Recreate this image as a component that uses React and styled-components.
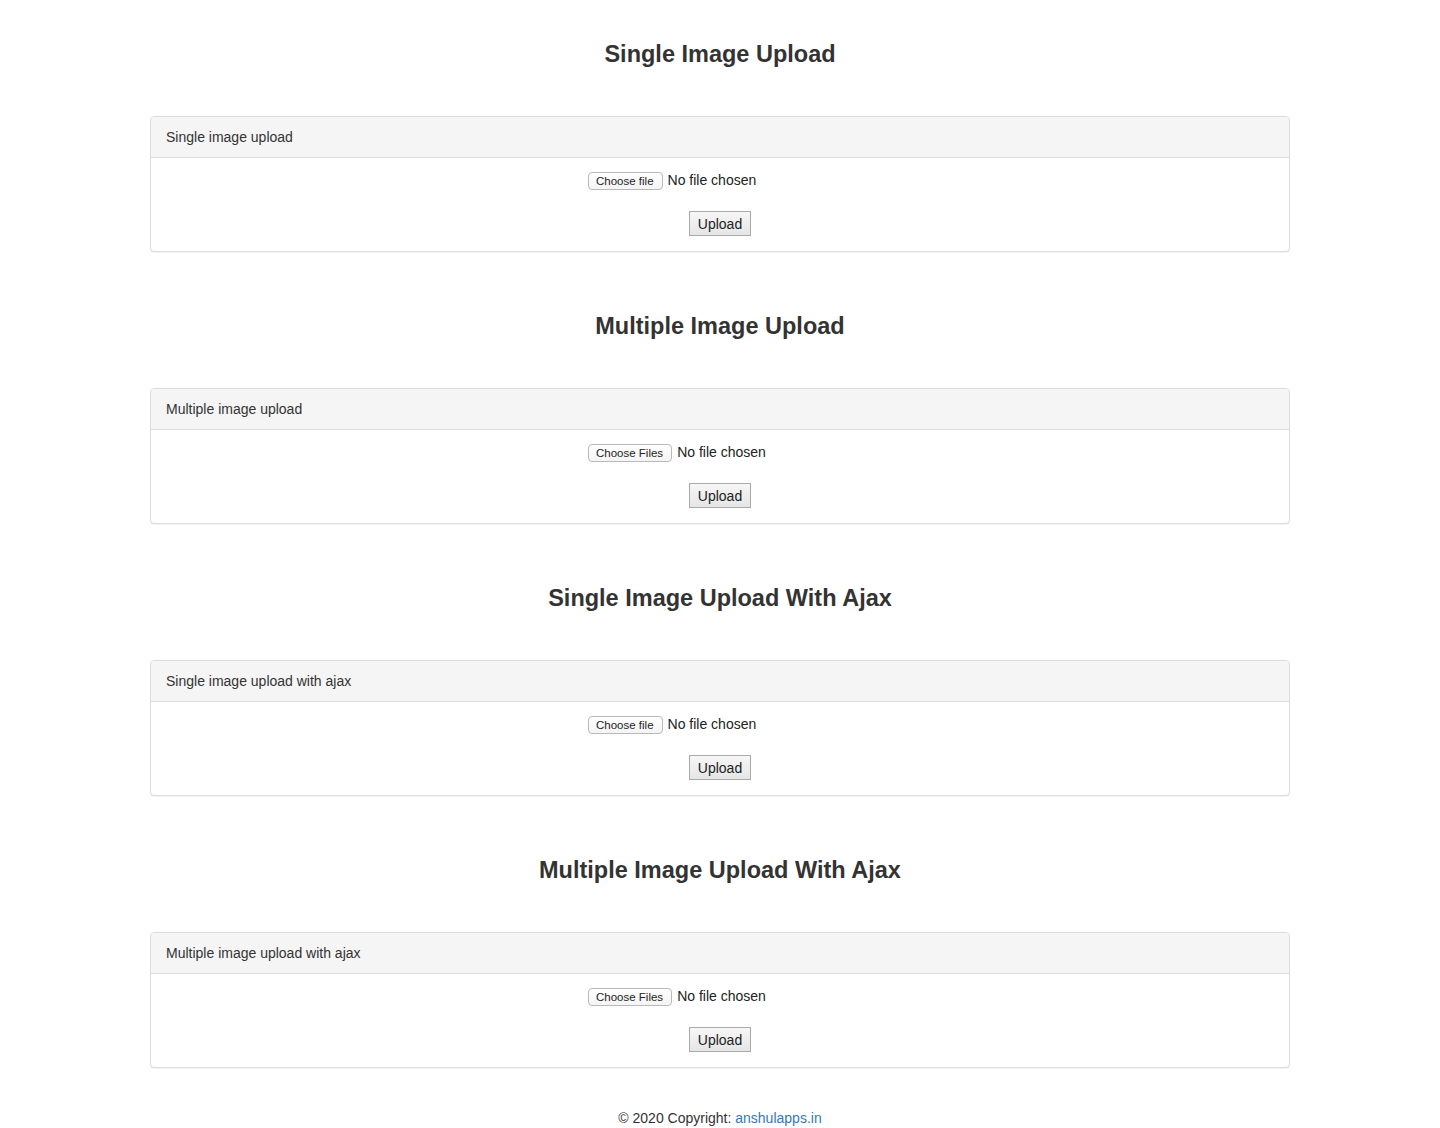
import React from "react";
import styled, { createGlobalStyle } from "styled-components";

const GlobalStyle = createGlobalStyle`
  body {
    margin: 0;
    background: #fff;
    color: #333;
    font-family: "Liberation Sans", Arial, sans-serif;
    font-size: 14px;
    line-height: 1.42857;
  }
`;

const sections = [
  { title: "Single Image Upload", label: "Single image upload", multiple: false },
  { title: "Multiple Image Upload", label: "Multiple image upload", multiple: true },
  { title: "Single Image Upload With Ajax", label: "Single image upload with ajax", multiple: false },
  { title: "Multiple Image Upload With Ajax", label: "Multiple image upload with ajax", multiple: true },
];

const App = () => {
  return (
    <>
      <GlobalStyle />
      <Container>
        {sections.map((s, idx) => (
          <Section key={idx}>
            <Title>{s.title}</Title>
            <Panel>
              <PanelHeading>{s.label}</PanelHeading>
              <PanelBody>
                <FileRow>
                  <ChooseButton>
                    {s.multiple ? "Choose Files" : "Choose file"}
                    <input type="file" multiple={s.multiple} />
                  </ChooseButton>
                  <FileName>No file chosen</FileName>
                </FileRow>
                <UploadButton type="button">Upload</UploadButton>
              </PanelBody>
            </Panel>
          </Section>
        ))}
        <Footer>
          © 2020 Copyright: <a href="#">anshulapps.in</a>
        </Footer>
      </Container>
    </>
  );
};

const Container = styled.div`
  width: 1140px;
  margin: 0 auto;
`;

const Section = styled.section`
  padding-top: 41px;
  padding-bottom: 20px;
`;

const Title = styled.h3`
  margin: 0 0 49px;
  font-size: 23.5px;
  line-height: 26px;
  font-weight: 700;
  text-align: center;
  color: #333;
`;

const Panel = styled.div`
  border: 1px solid #ddd;
  border-radius: 4px;
  background: #fff;
  box-shadow: 0 1px 1px rgba(0, 0, 0, 0.05);
`;

const PanelHeading = styled.div`
  padding: 10px 15px;
  background: #f5f5f5;
  border-bottom: 1px solid #ddd;
  border-radius: 3px 3px 0 0;
  line-height: 20px;
`;

const PanelBody = styled.div`
  padding: 15px;
  display: flex;
  flex-direction: column;
  align-items: center;
`;

const FileRow = styled.div`
  width: 264px;
  height: 20px;
  display: flex;
  align-items: center;
  gap: 5px;
  margin-top: -2px;
  margin-bottom: 20px;
`;

const ChooseButton = styled.label`
  display: inline-block;
  height: 16px;
  padding: 0 8px 0 7px;
  border: 1px solid #b9b9b9;
  border-radius: 4px;
  background: linear-gradient(#fff, #f4f4f4);
  font-size: 11.5px;
  line-height: 16px;
  color: #222;
  white-space: nowrap;

  input {
    display: none;
  }
`;

const FileName = styled.span`
  font-size: 14px;
  color: #222;
`;

const UploadButton = styled.button`
  height: 25px;
  padding: 0 8px;
  border: 1px solid #a9a9a9;
  border-radius: 0;
  background: linear-gradient(#f6f6f6, #e6e6e6);
  font-family: "Liberation Sans", Arial, sans-serif;
  font-size: 14px;
  color: #222;
`;

const Footer = styled.footer`
  padding: 20px 0 0;
  text-align: center;
  line-height: 20px;

  a {
    color: #337ab7;
    text-decoration: none;
  }
`;

export default App;
